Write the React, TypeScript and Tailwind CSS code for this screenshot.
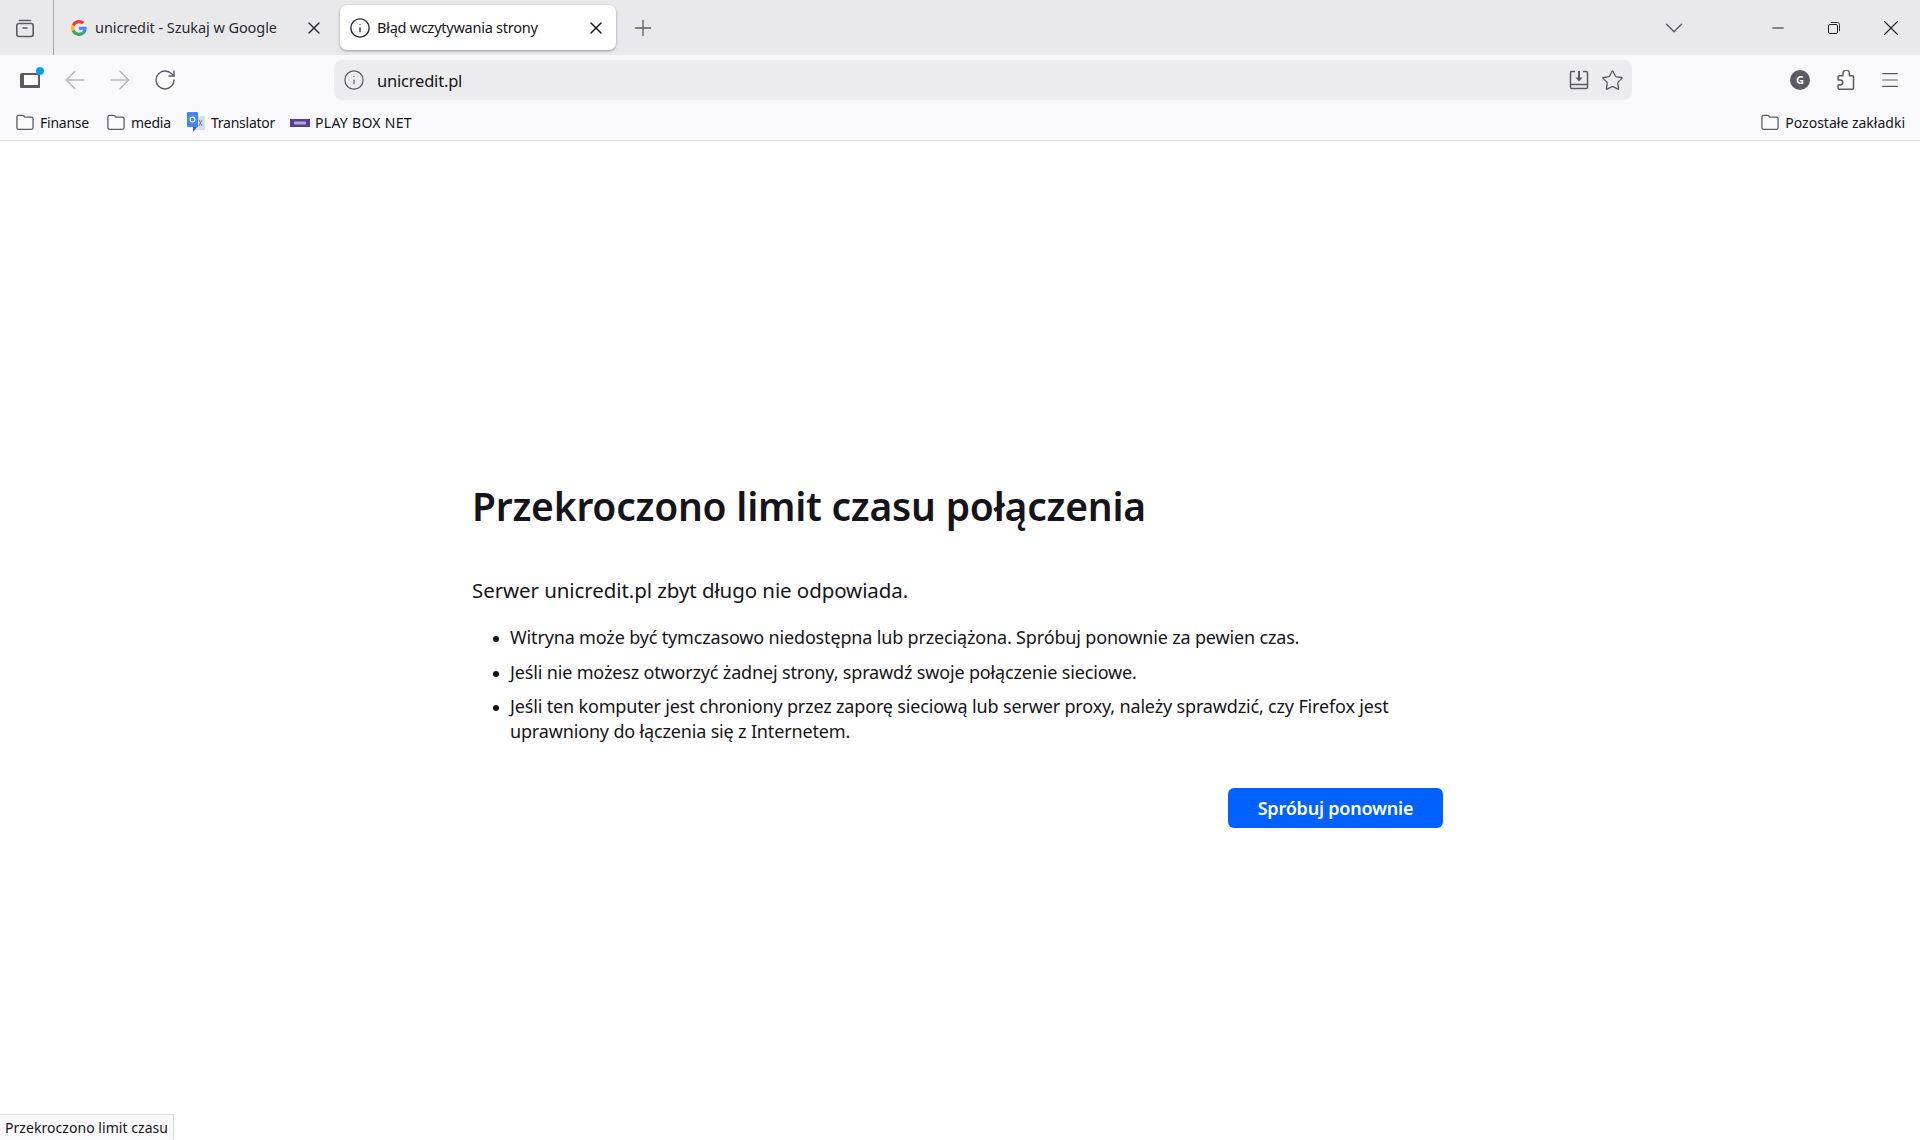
import { ChevronDown, Minus, X, Plus, ArrowLeft, ArrowRight, RotateCw, Info, Star, Menu } from 'lucide-react'

function FolderIcon() {
  return (
    <svg width="20" height="17" viewBox="0 0 18 16" fill="none" stroke="#5b5b66" strokeWidth="1.200" className="shrink-0">
      <path d="M3 1.200h3.600c.6 0 1 .3 1.400.7l.9 1h6.100c1 0 1.600.7 1.600 1.600v8.300c0 1-.7 1.600-1.600 1.600H3c-1 0-1.600-.7-1.600-1.600V2.800C1.400 1.900 2 1.200 3 1.200z" />
    </svg>
  )
}

function GoogleIcon() {
  return (
    <svg width="16" height="16" viewBox="0 0 48 48" className="shrink-0">
      <path fill="#EA4335" d="M24 9.500c3.500 0 6.700 1.200 9.200 3.600l6.900-6.900C35.900 2.400 30.500 0 24 0 14.600 0 6.500 5.400 2.600 13.200l8 6.200C12.400 13.700 17.700 9.500 24 9.500z" />
      <path fill="#4285F4" d="M46.900 24.500c0-1.600-.1-3.100-.4-4.500H24v9h12.900c-.6 3-2.200 5.500-4.800 7.200l7.700 6c4.500-4.200 7.100-10.300 7.100-17.700z" />
      <path fill="#FBBC05" d="M10.500 28.600c-.5-1.400-.8-3-.8-4.600s.3-3.200.8-4.600l-8-6.200C.9 16.400 0 20.100 0 24s.9 7.600 2.600 10.800l7.900-6.200z" />
      <path fill="#34A853" d="M24 48c6.500 0 11.900-2.100 15.900-5.800l-7.700-6c-2.200 1.500-4.900 2.300-8.200 2.300-6.300 0-11.600-4.200-13.500-9.900l-8 6.200C6.500 42.600 14.600 48 24 48z" />
    </svg>
  )
}

function TabsIcon() {
  return (
    <svg width="20" height="20" viewBox="0 0 20 20" fill="none" stroke="#5b5b66" strokeWidth="1.600" strokeLinecap="round">
      <path d="M4.500 2.500h11" />
      <rect x="1.800" y="5.500" width="16.400" height="13" rx="2.200" />
      <path d="M8 10h4" />
    </svg>
  )
}

function SidebarIcon() {
  return (
    <div className="relative h-[15px] w-[20px]">
      <svg width="20" height="15" viewBox="0 0 20 15" className="absolute left-0 top-0">
        <rect x="1" y="1" width="18" height="13" rx="1.500" fill="#fff" stroke="#5b5b66" strokeWidth="2" />
        <rect x="0" y="1" width="4" height="13" fill="#5b5b66" />
        <rect x="0" y="12" width="20" height="3" rx="1" fill="#5b5b66" />
      </svg>
      <span className="absolute right-[-4px] top-[-6px] h-[8px] w-[8px] rounded-full bg-[#0a9ff0]" />
    </div>
  )
}

function PuzzleIcon() {
  return (
    <svg width="18" height="20" viewBox="0 0 18 20" fill="none" stroke="#5b5b66" strokeWidth="1.500" strokeLinejoin="round">
      <path d="M6 5.800V3.200a3.200 3.200 0 0 1 6.400 0v2.600h3.100a1 1 0 0 1 1 1v11.200a1.200 1.200 0 0 1-1.200 1.200H2.300a1.200 1.200 0 0 1-1.200-1.200V15h2.100a2.500 2.500 0 0 0 0-5H1.100V7a1.200 1.200 0 0 1 1.200-1.200z" />
    </svg>
  )
}

function TranslatorIcon() {
  return (
    <svg width="18" height="21" viewBox="0 0 18 21" className="shrink-0">
      <rect x="6" y="4" width="12" height="14" rx="1" fill="#d9dbdf" />
      <path d="M12 8l3 6M15 8l-3 6" stroke="#777" strokeWidth="1" />
      <path d="M1 0h9a1 1 0 0 1 1 1v14H1a1 1 0 0 1-1-1V1a1 1 0 0 1 1-1z" fill="#4285f4" />
      <path d="M6 15v5l4-5z" fill="#2a62c4" />
      <circle cx="5.500" cy="7.500" r="2.400" fill="none" stroke="#fff" strokeWidth="1.100" />
    </svg>
  )
}

function PlayIcon() {
  return (
    <svg width="20" height="8" viewBox="0 0 20 8" className="shrink-0">
      <rect width="20" height="8" fill="#5b3a99" />
      <rect x="4" y="2.500" width="12" height="3" fill="#b6a8d6" />
    </svg>
  )
}

function DownloadBoxIcon() {
  return (
    <svg width="20" height="20" viewBox="0 0 20 20" fill="none" stroke="#5b5b66" strokeWidth="1.500">
      <path d="M6 1.500H2.800c-.8 0-1.300.6-1.300 1.300v14.400c0 .8.6 1.300 1.300 1.300h14.400c.8 0 1.300-.6 1.300-1.300V2.800c0-.8-.6-1.300-1.300-1.300H14" />
      <path d="M1.500 14.500h17" />
      <path d="M10 1v9" strokeWidth="2" />
      <path d="M6.500 7.500L10 11.500l3.500-4z" fill="#5b5b66" stroke="none" />
    </svg>
  )
}

function RestoreIcon() {
  return (
    <svg width="12" height="12" viewBox="0 0 12 12" fill="none" stroke="#1f1f22" strokeWidth="1">
      <rect x="0.500" y="2.500" width="9" height="9" rx="1.500" />
      <path d="M2.800 .5h6.700c1.100 0 2 .9 2 2v6.700" stroke="#333" />
    </svg>
  )
}

const bookmarks = [
  { label: 'Finanse', icon: <FolderIcon />, cls: 'w-[91px] gap-[5px] tracking-[-0.25px]' },
  { label: 'media', icon: <FolderIcon />, cls: 'w-[81px] gap-[5px] tracking-[-0.25px]' },
  { label: 'Translator', icon: <TranslatorIcon />, cls: 'w-[103px] gap-[6px] tracking-[-0.25px]' },
  { label: 'PLAY BOX NET', icon: <PlayIcon />, cls: 'w-[122px] gap-[5px] tracking-[0.3px]' },
]

const hints = [
  'Witryna może być tymczasowo niedostępna lub przeciążona. Spróbuj ponownie za pewien czas.',
  'Jeśli nie możesz otworzyć żadnej strony, sprawdź swoje połączenie sieciowe.',
  'Jeśli ten komputer jest chroniony przez zaporę sieciową lub serwer proxy, należy sprawdzić, czy Firefox jest uprawniony do łączenia się z Internetem.',
]

export default function App() {
  return (
    <div className="relative flex h-screen flex-col overflow-hidden bg-white font-['Noto_Sans',sans-serif] text-[#15141a]">
      {/* tab strip */}
      <div className="flex h-[55px] shrink-0 items-center bg-[#e9e9ec]">
        <div className="flex h-full w-[54px] shrink-0 items-center justify-center border-r border-[#a8a8ae] pr-[4px]">
          <TabsIcon />
        </div>
        <div className="flex w-[286px] items-center pl-[17px] pr-[16px]">
          <GoogleIcon />
          <span className="ml-[8px] flex-1 truncate text-[14.5px] tracking-[-0.07px] text-[#2b2a33]">unicredit - Szukaj w Google</span>
          <X size={20} strokeWidth={1.7} className="text-[#2b2a33]" />
        </div>
        <div className="flex h-[45px] w-[276px] items-center rounded-[7px] bg-white pl-[9px] pr-[10px] shadow-[0_1px_3px_rgba(0,0,0,0.35)]">
          <Info size={22} strokeWidth={1.5} className="text-[#2b2a33]" />
          <span className="ml-[6px] flex-1 truncate text-[14.5px] tracking-[-0.25px]">Błąd wczytywania strony</span>
          <X size={20} strokeWidth={1.7} />
        </div>
        <Plus size={26} strokeWidth={1.2} className="ml-[14px] text-[#5b5b66]" />
        <div className="ml-auto flex items-center">
          <ChevronDown size={30} strokeWidth={1.1} className="mr-[80px] text-[#5b5b66]" />
          <Minus size={18} strokeWidth={1.3} className="mr-[41px] text-[#1f1f22]" />
          <RestoreIcon />
          <X size={26} strokeWidth={1} className="ml-[38px] mr-[16px] text-[#1f1f22]" />
        </div>
      </div>

      {/* toolbar */}
      <div className="flex h-[50px] shrink-0 items-center bg-[#f9f9fb]">
        <div className="ml-[20px] w-[20px]"><SidebarIcon /></div>
        <ArrowLeft size={30} strokeWidth={1.1} className="ml-[20px] text-[#b5b5ba]" />
        <ArrowRight size={30} strokeWidth={1.1} className="ml-[15px] text-[#b5b5ba]" />
        <RotateCw size={24} strokeWidth={1.4} className="ml-[18px] text-[#5b5b66]" />
        <div className="ml-[157px] flex h-[40px] w-[1298px] items-center rounded-[8px] bg-[#ececee] pl-[9px] pr-[8px]">
          <Info size={22} strokeWidth={1.3} className="text-[#5b5b66]" />
          <span className="ml-[12px] flex-1 pt-[2px] text-[16.5px] tracking-[-0.2px]">unicredit.pl</span>
          <DownloadBoxIcon />
          <Star size={23} strokeWidth={1.4} className="ml-[12px] text-[#5b5b66]" />
        </div>
        <div className="ml-auto flex items-center">
          <span className="flex h-[20px] w-[20px] items-center justify-center rounded-full bg-[#5b5b66] text-[11px] font-bold text-white">G</span>
          <div className="ml-[27px]"><PuzzleIcon /></div>
          <Menu size={22} strokeWidth={1.3} className="ml-[24px] mr-[19px] text-[#5b5b66]" />
        </div>
      </div>

      {/* bookmarks */}
      <div className="flex h-[36px] shrink-0 items-center border-b border-[#e0e0e6] bg-[#f9f9fb] pl-[15px] pr-[15px] text-[14px] text-[#15141a]">
        {bookmarks.map((b) => (
          <div key={b.label} className={`flex items-center ${b.cls}`}>
            {b.icon}
            <span>{b.label}</span>
          </div>
        ))}
        <div className="ml-auto flex items-center gap-[5px]">
          <FolderIcon />
          <span>Pozostałe zakładki</span>
        </div>
      </div>

      {/* error page */}
      <main className="flex-1 pl-[472px] pt-[340px]">
        <div className="w-[971px]">
          <h1 className="text-[39px] font-semibold leading-[50px] tracking-[-0.23px] text-[#15141a]">Przekroczono limit czasu połączenia</h1>
          <p className="mt-[45px] text-[20.5px] leading-[28px] tracking-[-0.08px]">Serwer unicredit.pl zbyt długo nie odpowiada.</p>
          <ul className="mt-[21px] pl-[38px] text-[18px] leading-[25px] tracking-[-0.16px]">
            {hints.map((t) => (
              <li key={t} className="relative mb-[10px] before:absolute before:left-[-17px] before:top-[11px] before:h-[6px] before:w-[6px] before:rounded-full before:bg-[#15141a] before:content-[''] nth-[2]:mb-[9px]">
                {t}
              </li>
            ))}
          </ul>
          <div className="mt-[44px] flex justify-end">
            <button className="h-[40px] w-[215px] rounded-[6px] bg-[#0061ff] pt-[1px] text-[18px] font-semibold tracking-[-0.2px] text-white">Spróbuj ponownie</button>
          </div>
        </div>
      </main>

      {/* status panel */}
      <div className="absolute bottom-0 left-0 flex h-[26px] w-[174px] items-center border-r border-t border-[#e0e0e6] bg-[#f9f9fb] pl-[5px] text-[14px] tracking-[0.05px] text-[#15141a]">
        Przekroczono limit czasu
      </div>
    </div>
  )
}
